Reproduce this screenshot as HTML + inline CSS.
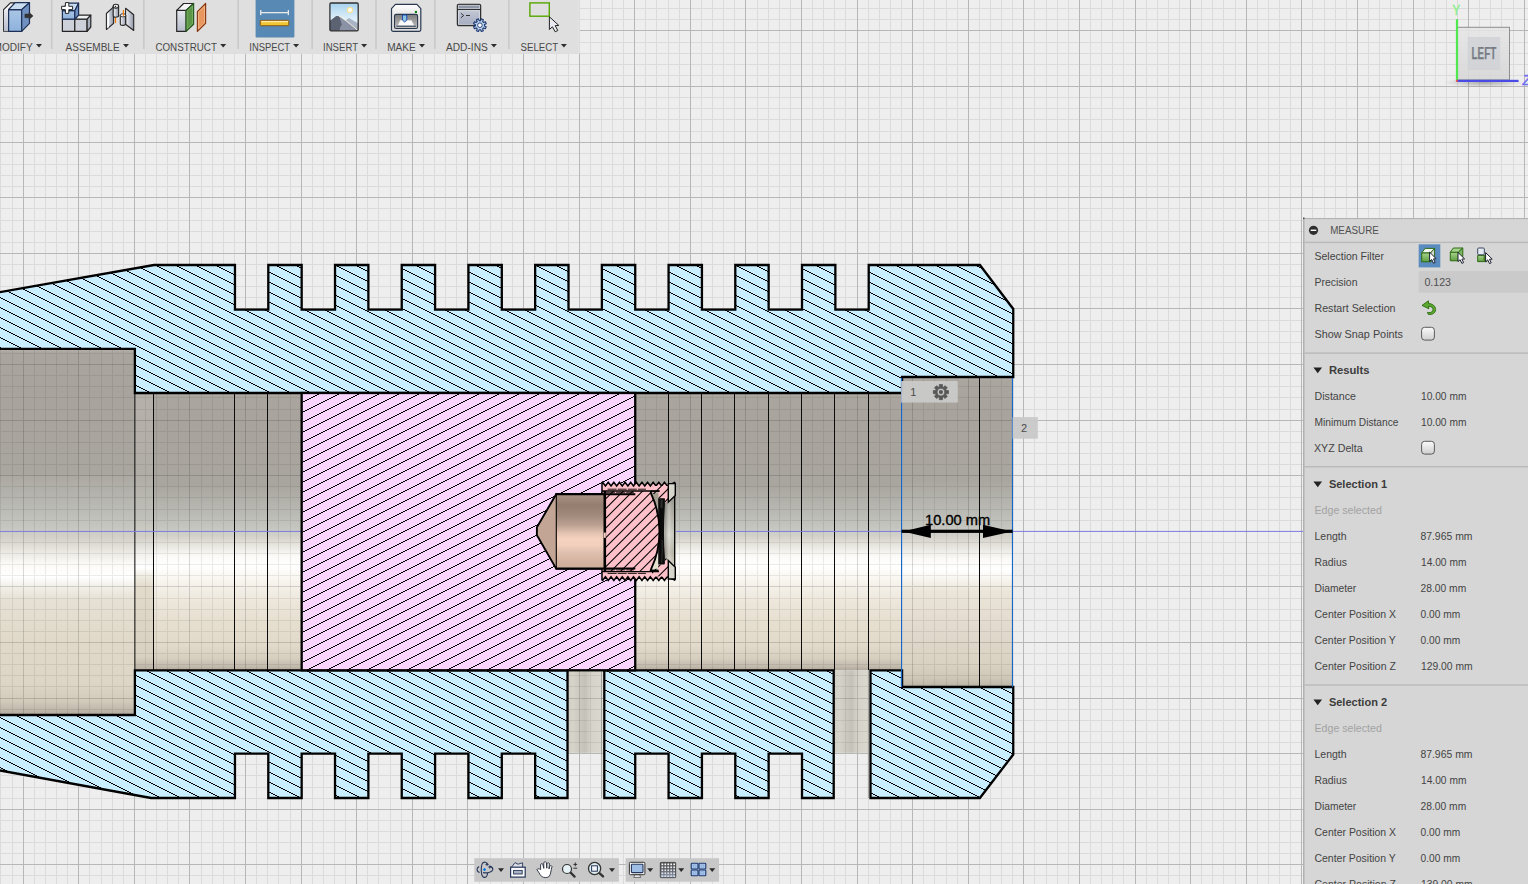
<!DOCTYPE html>
<html lang="en"><head><meta charset="utf-8"><title>Measure</title>
<style>
html,body{margin:0;padding:0;background:#eeeeee;overflow:hidden}
body{width:1528px;height:884px;position:relative;font-family:"Liberation Sans",Arial,sans-serif}
#cad{position:absolute;left:0;top:0;display:block}
</style></head><body>
<svg id="cad" width="1528" height="884" viewBox="0 0 1528 884">
<defs>
<linearGradient id="bore" x1="0" y1="0" x2="0" y2="1">
<stop offset="0.0" stop-color="#b6b2ab"/>
<stop offset="0.012" stop-color="#aaa69f"/>
<stop offset="0.1" stop-color="#a8a49d"/>
<stop offset="0.334" stop-color="#a9a69f"/>
<stop offset="0.428" stop-color="#b9b9b3"/>
<stop offset="0.487" stop-color="#c6c6c0"/>
<stop offset="0.522" stop-color="#d6d4cc"/>
<stop offset="0.557" stop-color="#eceae4"/>
<stop offset="0.587" stop-color="#fbfaf7"/>
<stop offset="0.622" stop-color="#ffffff"/>
<stop offset="0.657" stop-color="#fbf9f4"/>
<stop offset="0.7" stop-color="#f4f0e8"/>
<stop offset="0.757" stop-color="#ece6da"/>
<stop offset="0.827" stop-color="#e6dfd0"/>
<stop offset="0.91" stop-color="#e1d9c9"/>
<stop offset="0.957" stop-color="#d6cebf"/>
<stop offset="0.986" stop-color="#c2baac"/>
<stop offset="1.0" stop-color="#b0a89c"/>
</linearGradient>
<linearGradient id="boreC" x1="0" y1="0" x2="0" y2="1">
<stop offset="0.0" stop-color="#b6b2ab"/>
<stop offset="0.012" stop-color="#aaa69f"/>
<stop offset="0.1" stop-color="#a8a49d"/>
<stop offset="0.334" stop-color="#a9a69f"/>
<stop offset="0.428" stop-color="#b9b9b3"/>
<stop offset="0.487" stop-color="#c6c6c0"/>
<stop offset="0.522" stop-color="#d6d4cc"/>
<stop offset="0.557" stop-color="#eceae4"/>
<stop offset="0.587" stop-color="#fbfaf7"/>
<stop offset="0.622" stop-color="#ffffff"/>
<stop offset="0.652" stop-color="#f8f5ef"/>
<stop offset="0.689" stop-color="#ece6da"/>
<stop offset="0.75" stop-color="#e6dfd2"/>
<stop offset="0.806" stop-color="#e2dace"/>
<stop offset="0.926" stop-color="#d9d1c1"/>
<stop offset="0.97" stop-color="#cfc7b7"/>
<stop offset="0.99" stop-color="#c2baac"/>
<stop offset="1.0" stop-color="#b0a89c"/>
</linearGradient>
<linearGradient id="boreL" x1="0" y1="0" x2="0" y2="1">
<stop offset="0.0" stop-color="#b6b2ab"/>
<stop offset="0.012" stop-color="#aaa69f"/>
<stop offset="0.1" stop-color="#a8a49d"/>
<stop offset="0.334" stop-color="#a9a69f"/>
<stop offset="0.428" stop-color="#b9b9b3"/>
<stop offset="0.487" stop-color="#c6c6c0"/>
<stop offset="0.522" stop-color="#d6d4cc"/>
<stop offset="0.557" stop-color="#eceae4"/>
<stop offset="0.587" stop-color="#fbfaf7"/>
<stop offset="0.622" stop-color="#ffffff"/>
<stop offset="0.65" stop-color="#f2efe8"/>
<stop offset="0.685" stop-color="#e6e1d5"/>
<stop offset="0.8" stop-color="#e0d9c9"/>
<stop offset="0.915" stop-color="#ddd5c5"/>
<stop offset="0.962" stop-color="#d2cabb"/>
<stop offset="0.985" stop-color="#c0b8ab"/>
<stop offset="1.0" stop-color="#b2aa9d"/>
</linearGradient>
<linearGradient id="hole" x1="0" y1="0" x2="1" y2="0"><stop offset="0" stop-color="#cfcdc2"/><stop offset="0.15" stop-color="#d6d4ca"/><stop offset="0.42" stop-color="#c9c7bd"/><stop offset="0.52" stop-color="#c4c2b8"/><stop offset="0.68" stop-color="#d5d3c9"/><stop offset="1" stop-color="#dad8cf"/></linearGradient>
<linearGradient id="chamf" x1="0" y1="0" x2="0" y2="1"><stop offset="0" stop-color="#b6b2ab"/><stop offset="0.3" stop-color="#b0ada6"/><stop offset="0.45" stop-color="#c0c0ba"/><stop offset="0.52" stop-color="#d2d0c8"/><stop offset="0.585" stop-color="#f4f3ef"/><stop offset="0.63" stop-color="#ffffff"/><stop offset="0.66" stop-color="#f0ece2"/><stop offset="0.70" stop-color="#e2dbcc"/><stop offset="0.80" stop-color="#ddd5c5"/><stop offset="0.95" stop-color="#d8d0c0"/><stop offset="1" stop-color="#b8b0a3"/></linearGradient>
<linearGradient id="copper" x1="0" y1="0" x2="0" y2="1"><stop offset="0" stop-color="#ab9386"/><stop offset="0.15" stop-color="#947c6f"/><stop offset="0.3" stop-color="#a38b7e"/><stop offset="0.42" stop-color="#bda293"/><stop offset="0.52" stop-color="#e2c2b1"/><stop offset="0.60" stop-color="#f5d2c0"/><stop offset="0.68" stop-color="#f3d0be"/><stop offset="0.78" stop-color="#dfbfae"/><stop offset="0.91" stop-color="#d3b29f"/><stop offset="1" stop-color="#ccac99"/></linearGradient>
<linearGradient id="silver" x1="0" y1="0" x2="1" y2="0"><stop offset="0" stop-color="#8c8a82"/><stop offset="0.35" stop-color="#d8d6cc"/><stop offset="0.7" stop-color="#bdbbb0"/><stop offset="1" stop-color="#a8a69c"/></linearGradient>
<pattern id="hb" x="0" y="0" width="20" height="10" patternUnits="userSpaceOnUse" shape-rendering="crispEdges">
<rect x="5" y="0" width="2" height="1" fill="#000"/>
<rect x="7" y="1" width="2" height="1" fill="#000"/>
<rect x="9" y="2" width="2" height="1" fill="#000"/>
<rect x="11" y="3" width="2" height="1" fill="#000"/>
<rect x="13" y="4" width="2" height="1" fill="#000"/>
<rect x="15" y="5" width="2" height="1" fill="#000"/>
<rect x="17" y="6" width="2" height="1" fill="#000"/>
<rect x="19" y="7" width="2" height="1" fill="#000"/>
<rect x="-1" y="7" width="2" height="1" fill="#000"/>
<rect x="1" y="8" width="2" height="1" fill="#000"/>
<rect x="3" y="9" width="2" height="1" fill="#000"/>
</pattern>
<pattern id="hp" x="0" y="0" width="20" height="10" patternUnits="userSpaceOnUse" shape-rendering="crispEdges">
<rect x="5" y="0" width="2" height="1" fill="#000"/>
<rect x="3" y="1" width="2" height="1" fill="#000"/>
<rect x="1" y="2" width="2" height="1" fill="#000"/>
<rect x="19" y="3" width="2" height="1" fill="#000"/>
<rect x="-1" y="3" width="2" height="1" fill="#000"/>
<rect x="17" y="4" width="2" height="1" fill="#000"/>
<rect x="15" y="5" width="2" height="1" fill="#000"/>
<rect x="13" y="6" width="2" height="1" fill="#000"/>
<rect x="11" y="7" width="2" height="1" fill="#000"/>
<rect x="9" y="8" width="2" height="1" fill="#000"/>
<rect x="7" y="9" width="2" height="1" fill="#000"/>
</pattern>
<clipPath id="cBlue"><polygon points="-20.00,295.60 154.00,265.00 234.96,265.00 234.96,309.60 268.31,309.60 268.31,265.00 301.67,265.00 301.67,309.60 335.02,309.60 335.02,265.00 368.38,265.00 368.38,309.60 401.73,309.60 401.73,265.00 435.09,265.00 435.09,309.60 468.44,309.60 468.44,265.00 501.80,265.00 501.80,309.60 535.15,309.60 535.15,265.00 568.51,265.00 568.51,309.60 601.87,309.60 601.87,265.00 635.22,265.00 635.22,309.60 668.58,309.60 668.58,265.00 701.93,265.00 701.93,309.60 735.29,309.60 735.29,265.00 768.64,265.00 768.64,309.60 802.00,309.60 802.00,265.00 835.35,265.00 835.35,309.60 868.71,309.60 868.71,265.00 979.89,265.00 1013.25,309.00 1013.25,377.00 902.07,377.00 902.07,393.00 134.89,393.00 134.89,348.80 -20.00,348.80"/><polygon points="-20.00,715.00 134.89,715.00 134.89,670.30 567.50,670.30 567.50,798.00 535.15,798.00 535.15,753.60 501.80,753.60 501.80,798.00 468.44,798.00 468.44,753.60 435.09,753.60 435.09,798.00 401.73,798.00 401.73,753.60 368.38,753.60 368.38,798.00 335.02,798.00 335.02,753.60 301.67,753.60 301.67,798.00 268.31,798.00 268.31,753.60 234.96,753.60 234.96,798.00 151.00,798.00 -20.00,766.90"/><polygon points="604.30,670.30 833.70,670.30 833.70,798.00 802.00,798.00 802.00,753.60 768.64,753.60 768.64,798.00 735.29,798.00 735.29,753.60 701.93,753.60 701.93,798.00 668.58,798.00 668.58,753.60 635.22,753.60 635.22,798.00 604.30,798.00"/><polygon points="870.50,670.30 902.07,670.30 902.07,687.00 1013.25,687.00 1013.25,754.50 979.89,798.00 870.50,798.00"/></clipPath>
</defs>
<rect width="1528" height="884" fill="#eeeeee"/>
<path d="M0.5 0.0V884.0M12.5 0.0V884.0M34.5 0.0V884.0M45.5 0.0V884.0M56.5 0.0V884.0M67.5 0.0V884.0M89.5 0.0V884.0M101.5 0.0V884.0M112.5 0.0V884.0M123.5 0.0V884.0M145.5 0.0V884.0M156.5 0.0V884.0M167.5 0.0V884.0M178.5 0.0V884.0M201.5 0.0V884.0M212.5 0.0V884.0M223.5 0.0V884.0M234.5 0.0V884.0M256.5 0.0V884.0M267.5 0.0V884.0M278.5 0.0V884.0M290.5 0.0V884.0M312.5 0.0V884.0M323.5 0.0V884.0M334.5 0.0V884.0M345.5 0.0V884.0M367.5 0.0V884.0M378.5 0.0V884.0M390.5 0.0V884.0M401.5 0.0V884.0M423.5 0.0V884.0M434.5 0.0V884.0M445.5 0.0V884.0M456.5 0.0V884.0M479.5 0.0V884.0M490.5 0.0V884.0M501.5 0.0V884.0M512.5 0.0V884.0M534.5 0.0V884.0M545.5 0.0V884.0M556.5 0.0V884.0M568.5 0.0V884.0M590.5 0.0V884.0M601.5 0.0V884.0M612.5 0.0V884.0M623.5 0.0V884.0M645.5 0.0V884.0M656.5 0.0V884.0M668.5 0.0V884.0M679.5 0.0V884.0M701.5 0.0V884.0M712.5 0.0V884.0M723.5 0.0V884.0M734.5 0.0V884.0M757.5 0.0V884.0M768.5 0.0V884.0M779.5 0.0V884.0M790.5 0.0V884.0M812.5 0.0V884.0M823.5 0.0V884.0M834.5 0.0V884.0M845.5 0.0V884.0M868.5 0.0V884.0M879.5 0.0V884.0M890.5 0.0V884.0M901.5 0.0V884.0M923.5 0.0V884.0M934.5 0.0V884.0M946.5 0.0V884.0M957.5 0.0V884.0M979.5 0.0V884.0M990.5 0.0V884.0M1001.5 0.0V884.0M1012.5 0.0V884.0M1034.5 0.0V884.0M1046.5 0.0V884.0M1057.5 0.0V884.0M1068.5 0.0V884.0M1090.5 0.0V884.0M1101.5 0.0V884.0M1112.5 0.0V884.0M1123.5 0.0V884.0M1146.5 0.0V884.0M1157.5 0.0V884.0M1168.5 0.0V884.0M1179.5 0.0V884.0M1201.5 0.0V884.0M1212.5 0.0V884.0M1223.5 0.0V884.0M1235.5 0.0V884.0M1257.5 0.0V884.0M1268.5 0.0V884.0M1279.5 0.0V884.0M1290.5 0.0V884.0M1312.5 0.0V884.0M1324.5 0.0V884.0M1335.5 0.0V884.0M1346.5 0.0V884.0M1368.5 0.0V884.0M1379.5 0.0V884.0M1390.5 0.0V884.0M1401.5 0.0V884.0M1424.5 0.0V884.0M1435.5 0.0V884.0M1446.5 0.0V884.0M1457.5 0.0V884.0M1479.5 0.0V884.0M1490.5 0.0V884.0M1501.5 0.0V884.0M1513.5 0.0V884.0M0.0 8.5H1528.0M0.0 19.5H1528.0M0.0 42.5H1528.0M0.0 53.5H1528.0M0.0 64.5H1528.0M0.0 75.5H1528.0M0.0 97.5H1528.0M0.0 108.5H1528.0M0.0 119.5H1528.0M0.0 131.5H1528.0M0.0 153.5H1528.0M0.0 164.5H1528.0M0.0 175.5H1528.0M0.0 186.5H1528.0M0.0 208.5H1528.0M0.0 220.5H1528.0M0.0 231.5H1528.0M0.0 242.5H1528.0M0.0 264.5H1528.0M0.0 275.5H1528.0M0.0 286.5H1528.0M0.0 297.5H1528.0M0.0 320.5H1528.0M0.0 331.5H1528.0M0.0 342.5H1528.0M0.0 353.5H1528.0M0.0 375.5H1528.0M0.0 386.5H1528.0M0.0 397.5H1528.0M0.0 409.5H1528.0M0.0 431.5H1528.0M0.0 442.5H1528.0M0.0 453.5H1528.0M0.0 464.5H1528.0M0.0 486.5H1528.0M0.0 497.5H1528.0M0.0 509.5H1528.0M0.0 520.5H1528.0M0.0 542.5H1528.0M0.0 553.5H1528.0M0.0 564.5H1528.0M0.0 575.5H1528.0M0.0 598.5H1528.0M0.0 609.5H1528.0M0.0 620.5H1528.0M0.0 631.5H1528.0M0.0 653.5H1528.0M0.0 664.5H1528.0M0.0 675.5H1528.0M0.0 686.5H1528.0M0.0 709.5H1528.0M0.0 720.5H1528.0M0.0 731.5H1528.0M0.0 742.5H1528.0M0.0 764.5H1528.0M0.0 775.5H1528.0M0.0 787.5H1528.0M0.0 798.5H1528.0M0.0 820.5H1528.0M0.0 831.5H1528.0M0.0 842.5H1528.0M0.0 853.5H1528.0M0.0 875.5H1528.0" stroke="#dbdbdb" stroke-width="1" fill="none" shape-rendering="crispEdges"/>
<path d="M23.5 0.0V884.0M78.5 0.0V884.0M134.5 0.0V884.0M189.5 0.0V884.0M245.5 0.0V884.0M301.5 0.0V884.0M356.5 0.0V884.0M412.5 0.0V884.0M467.5 0.0V884.0M523.5 0.0V884.0M579.5 0.0V884.0M634.5 0.0V884.0M690.5 0.0V884.0M745.5 0.0V884.0M801.5 0.0V884.0M857.5 0.0V884.0M912.5 0.0V884.0M968.5 0.0V884.0M1023.5 0.0V884.0M1079.5 0.0V884.0M1135.5 0.0V884.0M1190.5 0.0V884.0M1246.5 0.0V884.0M1301.5 0.0V884.0M1357.5 0.0V884.0M1413.5 0.0V884.0M1468.5 0.0V884.0M1524.5 0.0V884.0M0.0 30.5H1528.0M0.0 86.5H1528.0M0.0 142.5H1528.0M0.0 197.5H1528.0M0.0 253.5H1528.0M0.0 308.5H1528.0M0.0 364.5H1528.0M0.0 420.5H1528.0M0.0 475.5H1528.0M0.0 586.5H1528.0M0.0 642.5H1528.0M0.0 698.5H1528.0M0.0 753.5H1528.0M0.0 809.5H1528.0M0.0 864.5H1528.0" stroke="#b7b7b7" stroke-width="1" fill="none" shape-rendering="crispEdges"/>
<g id="bore">
<rect x="-5.00" y="348.80" width="139.89" height="366.20" fill="url(#boreL)"/>
<rect x="134.89" y="393.00" width="767.18" height="277.30" fill="url(#bore)"/>
<rect x="902.07" y="377.00" width="111.18" height="310.00" fill="url(#boreC)"/>
<rect x="567.5" y="670.3" width="34.20" height="82.50" fill="url(#hole)"/>
<rect x="833.7" y="670.3" width="34.40" height="82.50" fill="url(#hole)"/>
<rect x="601.30" y="670.3" width="0.9" height="127.70" fill="#9a9a96"/>
<rect x="867.90" y="670.3" width="0.9" height="127.70" fill="#9a9a96"/>
<rect x="134.89" y="393.0" width="18.41" height="277.30" fill="url(#chamf)"/>
<path d="M0.5 348.8V715.0M12.5 348.8V715.0M34.5 348.8V715.0M45.5 348.8V715.0M56.5 348.8V715.0M67.5 348.8V715.0M89.5 348.8V715.0M101.5 348.8V715.0M112.5 348.8V715.0M123.5 348.8V715.0M0.0 353.5H134.9M0.0 375.5H134.9M0.0 386.5H134.9M0.0 397.5H134.9M0.0 409.5H134.9M0.0 431.5H134.9M0.0 442.5H134.9M0.0 453.5H134.9M0.0 464.5H134.9M0.0 486.5H134.9M0.0 497.5H134.9M0.0 509.5H134.9M0.0 520.5H134.9M0.0 542.5H134.9M0.0 553.5H134.9M0.0 564.5H134.9M0.0 575.5H134.9M0.0 598.5H134.9M0.0 609.5H134.9M0.0 620.5H134.9M0.0 631.5H134.9M0.0 653.5H134.9M0.0 664.5H134.9M0.0 675.5H134.9M0.0 686.5H134.9M0.0 709.5H134.9" stroke="#000" stroke-opacity="0.075" stroke-width="1" fill="none" shape-rendering="crispEdges"/>
<path d="M23.5 348.8V715.0M78.5 348.8V715.0M134.5 348.8V715.0M0.0 364.5H134.9M0.0 420.5H134.9M0.0 475.5H134.9M0.0 586.5H134.9M0.0 642.5H134.9M0.0 698.5H134.9" stroke="#000" stroke-opacity="0.15" stroke-width="1" fill="none" shape-rendering="crispEdges"/>
<path d="M145.5 393.0V670.3M156.5 393.0V670.3M167.5 393.0V670.3M178.5 393.0V670.3M201.5 393.0V670.3M212.5 393.0V670.3M223.5 393.0V670.3M234.5 393.0V670.3M256.5 393.0V670.3M267.5 393.0V670.3M278.5 393.0V670.3M290.5 393.0V670.3M312.5 393.0V670.3M323.5 393.0V670.3M334.5 393.0V670.3M345.5 393.0V670.3M367.5 393.0V670.3M378.5 393.0V670.3M390.5 393.0V670.3M401.5 393.0V670.3M423.5 393.0V670.3M434.5 393.0V670.3M445.5 393.0V670.3M456.5 393.0V670.3M479.5 393.0V670.3M490.5 393.0V670.3M501.5 393.0V670.3M512.5 393.0V670.3M534.5 393.0V670.3M545.5 393.0V670.3M556.5 393.0V670.3M568.5 393.0V670.3M590.5 393.0V670.3M601.5 393.0V670.3M612.5 393.0V670.3M623.5 393.0V670.3M645.5 393.0V670.3M656.5 393.0V670.3M668.5 393.0V670.3M679.5 393.0V670.3M701.5 393.0V670.3M712.5 393.0V670.3M723.5 393.0V670.3M734.5 393.0V670.3M757.5 393.0V670.3M768.5 393.0V670.3M779.5 393.0V670.3M790.5 393.0V670.3M812.5 393.0V670.3M823.5 393.0V670.3M834.5 393.0V670.3M845.5 393.0V670.3M868.5 393.0V670.3M879.5 393.0V670.3M890.5 393.0V670.3M901.5 393.0V670.3M134.9 397.5H902.1M134.9 409.5H902.1M134.9 431.5H902.1M134.9 442.5H902.1M134.9 453.5H902.1M134.9 464.5H902.1M134.9 486.5H902.1M134.9 497.5H902.1M134.9 509.5H902.1M134.9 520.5H902.1M134.9 542.5H902.1M134.9 553.5H902.1M134.9 564.5H902.1M134.9 575.5H902.1M134.9 598.5H902.1M134.9 609.5H902.1M134.9 620.5H902.1M134.9 631.5H902.1M134.9 653.5H902.1M134.9 664.5H902.1" stroke="#000" stroke-opacity="0.075" stroke-width="1" fill="none" shape-rendering="crispEdges"/>
<path d="M189.5 393.0V670.3M245.5 393.0V670.3M301.5 393.0V670.3M356.5 393.0V670.3M412.5 393.0V670.3M467.5 393.0V670.3M523.5 393.0V670.3M579.5 393.0V670.3M634.5 393.0V670.3M690.5 393.0V670.3M745.5 393.0V670.3M801.5 393.0V670.3M857.5 393.0V670.3M134.9 420.5H902.1M134.9 475.5H902.1M134.9 586.5H902.1M134.9 642.5H902.1" stroke="#000" stroke-opacity="0.15" stroke-width="1" fill="none" shape-rendering="crispEdges"/>
<path d="M923.5 377.0V687.0M934.5 377.0V687.0M946.5 377.0V687.0M957.5 377.0V687.0M979.5 377.0V687.0M990.5 377.0V687.0M1001.5 377.0V687.0M1012.5 377.0V687.0M902.1 386.5H1013.2M902.1 397.5H1013.2M902.1 409.5H1013.2M902.1 431.5H1013.2M902.1 442.5H1013.2M902.1 453.5H1013.2M902.1 464.5H1013.2M902.1 486.5H1013.2M902.1 497.5H1013.2M902.1 509.5H1013.2M902.1 520.5H1013.2M902.1 542.5H1013.2M902.1 553.5H1013.2M902.1 564.5H1013.2M902.1 575.5H1013.2M902.1 598.5H1013.2M902.1 609.5H1013.2M902.1 620.5H1013.2M902.1 631.5H1013.2M902.1 653.5H1013.2M902.1 664.5H1013.2M902.1 675.5H1013.2M902.1 686.5H1013.2" stroke="#000" stroke-opacity="0.075" stroke-width="1" fill="none" shape-rendering="crispEdges"/>
<path d="M912.5 377.0V687.0M968.5 377.0V687.0M902.1 420.5H1013.2M902.1 475.5H1013.2M902.1 586.5H1013.2M902.1 642.5H1013.2" stroke="#000" stroke-opacity="0.15" stroke-width="1" fill="none" shape-rendering="crispEdges"/>
<path d="M568.5 670.3V753.0M590.5 670.3V753.0M601.5 670.3V753.0M567.5 675.5H601.7M567.5 686.5H601.7M567.5 709.5H601.7M567.5 720.5H601.7M567.5 731.5H601.7M567.5 742.5H601.7" stroke="#000" stroke-opacity="0.075" stroke-width="1" fill="none" shape-rendering="crispEdges"/>
<path d="M579.5 670.3V753.0M567.5 698.5H601.7" stroke="#000" stroke-opacity="0.15" stroke-width="1" fill="none" shape-rendering="crispEdges"/>
<path d="M834.5 670.3V753.0M845.5 670.3V753.0M833.7 675.5H868.1M833.7 686.5H868.1M833.7 709.5H868.1M833.7 720.5H868.1M833.7 731.5H868.1M833.7 742.5H868.1" stroke="#000" stroke-opacity="0.075" stroke-width="1" fill="none" shape-rendering="crispEdges"/>
<path d="M857.5 670.3V753.0M833.7 698.5H868.1" stroke="#000" stroke-opacity="0.15" stroke-width="1" fill="none" shape-rendering="crispEdges"/>
<rect x="153" y="393.0" width="1" height="277.30" fill="#0a0a0a" shape-rendering="crispEdges"/>
<rect x="234" y="393.0" width="1" height="277.30" fill="#0a0a0a" shape-rendering="crispEdges"/>
<rect x="267" y="393.0" width="1" height="277.30" fill="#0a0a0a" shape-rendering="crispEdges"/>
<rect x="668" y="393.0" width="1" height="277.30" fill="#0a0a0a" shape-rendering="crispEdges"/>
<rect x="701" y="393.0" width="1" height="277.30" fill="#0a0a0a" shape-rendering="crispEdges"/>
<rect x="734" y="393.0" width="1" height="277.30" fill="#0a0a0a" shape-rendering="crispEdges"/>
<rect x="768" y="393.0" width="1" height="277.30" fill="#0a0a0a" shape-rendering="crispEdges"/>
<rect x="801" y="393.0" width="1" height="277.30" fill="#0a0a0a" shape-rendering="crispEdges"/>
<rect x="834" y="393.0" width="1" height="277.30" fill="#0a0a0a" shape-rendering="crispEdges"/>
<rect x="868" y="393.0" width="1" height="277.30" fill="#0a0a0a" shape-rendering="crispEdges"/>
<rect x="979" y="377.0" width="1" height="310.00" fill="#0a0a0a" shape-rendering="crispEdges"/>
<rect x="134.39" y="393.0" width="1" height="277.30" fill="#111"/>
</g>
<rect x="0" y="530.90" width="301.67" height="1" fill="#7c7ce0"/>
<rect x="676" y="530.90" width="627" height="1" fill="#7c7ce0"/>
<g id="blue"><polygon points="-20.00,295.60 154.00,265.00 234.96,265.00 234.96,309.60 268.31,309.60 268.31,265.00 301.67,265.00 301.67,309.60 335.02,309.60 335.02,265.00 368.38,265.00 368.38,309.60 401.73,309.60 401.73,265.00 435.09,265.00 435.09,309.60 468.44,309.60 468.44,265.00 501.80,265.00 501.80,309.60 535.15,309.60 535.15,265.00 568.51,265.00 568.51,309.60 601.87,309.60 601.87,265.00 635.22,265.00 635.22,309.60 668.58,309.60 668.58,265.00 701.93,265.00 701.93,309.60 735.29,309.60 735.29,265.00 768.64,265.00 768.64,309.60 802.00,309.60 802.00,265.00 835.35,265.00 835.35,309.60 868.71,309.60 868.71,265.00 979.89,265.00 1013.25,309.00 1013.25,377.00 902.07,377.00 902.07,393.00 134.89,393.00 134.89,348.80 -20.00,348.80" fill="#c8eeff"/><polygon points="-20.00,715.00 134.89,715.00 134.89,670.30 567.50,670.30 567.50,798.00 535.15,798.00 535.15,753.60 501.80,753.60 501.80,798.00 468.44,798.00 468.44,753.60 435.09,753.60 435.09,798.00 401.73,798.00 401.73,753.60 368.38,753.60 368.38,798.00 335.02,798.00 335.02,753.60 301.67,753.60 301.67,798.00 268.31,798.00 268.31,753.60 234.96,753.60 234.96,798.00 151.00,798.00 -20.00,766.90" fill="#c8eeff"/><polygon points="604.30,670.30 833.70,670.30 833.70,798.00 802.00,798.00 802.00,753.60 768.64,753.60 768.64,798.00 735.29,798.00 735.29,753.60 701.93,753.60 701.93,798.00 668.58,798.00 668.58,753.60 635.22,753.60 635.22,798.00 604.30,798.00" fill="#c8eeff"/><polygon points="870.50,670.30 902.07,670.30 902.07,687.00 1013.25,687.00 1013.25,754.50 979.89,798.00 870.50,798.00" fill="#c8eeff"/>
<polygon points="-20.00,295.60 154.00,265.00 234.96,265.00 234.96,309.60 268.31,309.60 268.31,265.00 301.67,265.00 301.67,309.60 335.02,309.60 335.02,265.00 368.38,265.00 368.38,309.60 401.73,309.60 401.73,265.00 435.09,265.00 435.09,309.60 468.44,309.60 468.44,265.00 501.80,265.00 501.80,309.60 535.15,309.60 535.15,265.00 568.51,265.00 568.51,309.60 601.87,309.60 601.87,265.00 635.22,265.00 635.22,309.60 668.58,309.60 668.58,265.00 701.93,265.00 701.93,309.60 735.29,309.60 735.29,265.00 768.64,265.00 768.64,309.60 802.00,309.60 802.00,265.00 835.35,265.00 835.35,309.60 868.71,309.60 868.71,265.00 979.89,265.00 1013.25,309.00 1013.25,377.00 902.07,377.00 902.07,393.00 134.89,393.00 134.89,348.80 -20.00,348.80" fill="url(#hb)"/>
<polygon points="-20.00,715.00 134.89,715.00 134.89,670.30 567.50,670.30 567.50,798.00 535.15,798.00 535.15,753.60 501.80,753.60 501.80,798.00 468.44,798.00 468.44,753.60 435.09,753.60 435.09,798.00 401.73,798.00 401.73,753.60 368.38,753.60 368.38,798.00 335.02,798.00 335.02,753.60 301.67,753.60 301.67,798.00 268.31,798.00 268.31,753.60 234.96,753.60 234.96,798.00 151.00,798.00 -20.00,766.90" fill="url(#hb)"/>
<polygon points="604.30,670.30 833.70,670.30 833.70,798.00 802.00,798.00 802.00,753.60 768.64,753.60 768.64,798.00 735.29,798.00 735.29,753.60 701.93,753.60 701.93,798.00 668.58,798.00 668.58,753.60 635.22,753.60 635.22,798.00 604.30,798.00" fill="url(#hb)"/>
<polygon points="870.50,670.30 902.07,670.30 902.07,687.00 1013.25,687.00 1013.25,754.50 979.89,798.00 870.50,798.00" fill="url(#hb)"/>
<polygon points="-20.00,295.60 154.00,265.00 234.96,265.00 234.96,309.60 268.31,309.60 268.31,265.00 301.67,265.00 301.67,309.60 335.02,309.60 335.02,265.00 368.38,265.00 368.38,309.60 401.73,309.60 401.73,265.00 435.09,265.00 435.09,309.60 468.44,309.60 468.44,265.00 501.80,265.00 501.80,309.60 535.15,309.60 535.15,265.00 568.51,265.00 568.51,309.60 601.87,309.60 601.87,265.00 635.22,265.00 635.22,309.60 668.58,309.60 668.58,265.00 701.93,265.00 701.93,309.60 735.29,309.60 735.29,265.00 768.64,265.00 768.64,309.60 802.00,309.60 802.00,265.00 835.35,265.00 835.35,309.60 868.71,309.60 868.71,265.00 979.89,265.00 1013.25,309.00 1013.25,377.00 902.07,377.00 902.07,393.00 134.89,393.00 134.89,348.80 -20.00,348.80" fill="none" stroke="#000" stroke-width="2.3" stroke-linejoin="miter"/>
<polygon points="-20.00,715.00 134.89,715.00 134.89,670.30 567.50,670.30 567.50,798.00 535.15,798.00 535.15,753.60 501.80,753.60 501.80,798.00 468.44,798.00 468.44,753.60 435.09,753.60 435.09,798.00 401.73,798.00 401.73,753.60 368.38,753.60 368.38,798.00 335.02,798.00 335.02,753.60 301.67,753.60 301.67,798.00 268.31,798.00 268.31,753.60 234.96,753.60 234.96,798.00 151.00,798.00 -20.00,766.90" fill="none" stroke="#000" stroke-width="2.3" stroke-linejoin="miter"/>
<polygon points="604.30,670.30 833.70,670.30 833.70,798.00 802.00,798.00 802.00,753.60 768.64,753.60 768.64,798.00 735.29,798.00 735.29,753.60 701.93,753.60 701.93,798.00 668.58,798.00 668.58,753.60 635.22,753.60 635.22,798.00 604.30,798.00" fill="none" stroke="#000" stroke-width="2.3" stroke-linejoin="miter"/>
<polygon points="870.50,670.30 902.07,670.30 902.07,687.00 1013.25,687.00 1013.25,754.50 979.89,798.00 870.50,798.00" fill="none" stroke="#000" stroke-width="2.3" stroke-linejoin="miter"/>
</g>
<clipPath id="cPink"><rect x="301.67" y="393.0" width="333.55" height="277.30"/></clipPath>
<g id="pink"><rect x="301.67" y="393.0" width="333.55" height="277.30" fill="#fad6ff"/>
<rect x="301.67" y="393.0" width="333.55" height="277.30" fill="url(#hp)"/>
<rect x="301.67" y="393.0" width="333.55" height="277.30" fill="none" stroke="#000" stroke-width="2.3"/>
</g>
<g id="insert">
<defs>
<linearGradient id="silv2" x1="0" y1="0" x2="0" y2="1"><stop offset="0" stop-color="#9b998f"/><stop offset="0.3" stop-color="#bdbbb1"/><stop offset="0.55" stop-color="#d9d8cf"/><stop offset="0.8" stop-color="#c3c0b2"/><stop offset="1" stop-color="#e2dfd2"/></linearGradient>
<linearGradient id="silv3" x1="0" y1="0" x2="1" y2="0"><stop offset="0" stop-color="#000" stop-opacity="0.28"/><stop offset="0.45" stop-color="#fff" stop-opacity="0.18"/><stop offset="1" stop-color="#000" stop-opacity="0.05"/></linearGradient>
</defs>
<path d="M536.9 535.3V527.3L538.1 525.3L556.3 493.9H604.8V568.9H556.3L538.1 537.3Z" fill="#c2a594"/>
<rect x="556.3" y="493.9" width="48.5" height="75.0" fill="url(#copper)"/>
<path d="M556.3 493.9V568.9" stroke="#000" stroke-width="1.1" fill="none"/>
<path d="M635.3 493.9H556.3L538.1 525.3L536.9 527.3V535.3L538.1 537.3L556.3 568.9H635.3" stroke="#000" stroke-width="1.9" fill="none" stroke-linejoin="round"/>
<path d="M602.00 493.90L602.00 482.70L602.60 482.20L605.41 485.90L608.22 482.20L611.03 485.90L613.84 482.20L616.65 485.90L619.46 482.20L622.27 485.90L625.08 482.20L627.89 485.90L630.70 482.20L633.51 485.90L636.32 482.20L639.13 485.90L641.94 482.20L644.75 485.90L647.56 482.20L650.37 485.90L653.18 482.20L655.99 485.90L658.80 482.20L661.61 485.90L664.42 482.20L667.23 485.90L675.30 482.20L675.30 493.90Z" fill="#ffc1c9"/>
<path d="M602.00 493.90L602.00 482.70L602.60 482.20L605.41 485.90L608.22 482.20L611.03 485.90L613.84 482.20L616.65 485.90L619.46 482.20L622.27 485.90L625.08 482.20L627.89 485.90L630.70 482.20L633.51 485.90L636.32 482.20L639.13 485.90L641.94 482.20L644.75 485.90L647.56 482.20L650.37 485.90L653.18 482.20L655.99 485.90L658.80 482.20L661.61 485.90L664.42 482.20L667.23 485.90L675.30 482.20" fill="none" stroke="#000" stroke-width="1.5" stroke-linejoin="miter"/>
<path d="M607.6 489.2H646" stroke="#000" stroke-width="0.9" stroke-dasharray="9 1.1" fill="none"/>
<path d="M602.00 568.70L602.00 579.90L602.60 580.40L605.41 576.70L608.22 580.40L611.03 576.70L613.84 580.40L616.65 576.70L619.46 580.40L622.27 576.70L625.08 580.40L627.89 576.70L630.70 580.40L633.51 576.70L636.32 580.40L639.13 576.70L641.94 580.40L644.75 576.70L647.56 580.40L650.37 576.70L653.18 580.40L655.99 576.70L658.80 580.40L661.61 576.70L664.42 580.40L667.23 576.70L675.30 580.40L675.30 568.70Z" fill="#ffc1c9"/>
<path d="M602.00 568.70L602.00 579.90L602.60 580.40L605.41 576.70L608.22 580.40L611.03 576.70L613.84 580.40L616.65 576.70L619.46 580.40L622.27 576.70L625.08 580.40L627.89 576.70L630.70 580.40L633.51 576.70L636.32 580.40L639.13 576.70L641.94 580.40L644.75 576.70L647.56 580.40L650.37 576.70L653.18 580.40L655.99 576.70L658.80 580.40L661.61 576.70L664.42 580.40L667.23 576.70L675.30 580.40" fill="none" stroke="#000" stroke-width="1.5" stroke-linejoin="miter"/>
<path d="M607.6 573.3999999999999H646" stroke="#000" stroke-width="0.9" stroke-dasharray="9 1.1" fill="none"/>
<path d="M651 486H668.3V502.4L664.8 505.6V498.2H658.2V493.9H651Z" fill="#ffc1c9"/>
<path d="M651 576.5999999999999H668.3V560.1999999999999L664.8 556.9999999999999V564.3999999999999H658.2V568.6999999999999H651Z" fill="#ffc1c9"/>
<path d="M664.6 503.5L674.8 495.4V567.1999999999999L664.6 559.0999999999999Z" fill="url(#silv2)"/>
<path d="M664.6 503.5L674.8 495.4V567.1999999999999L664.6 559.0999999999999Z" fill="url(#silv3)"/>
<path d="M674.7 482.6V579.9999999999999" stroke="#000" stroke-width="1.3" fill="none"/>
<path d="M651.4 492.4H658.4V508Z" fill="#a39d92"/>
<path d="M651.4 570.1999999999999H658.4V554.5999999999999Z" fill="#e5e1cf"/>
<path d="M651 491.2H659.4" stroke="#000" stroke-width="1.2"/>
<path d="M651 570.3999999999999H658.6" stroke="#000" stroke-width="1.6"/>
<path d="M658.2 498.2H664.2Q664.9 498.2 664.9 499V506Q663.2 531.3 664.9 556.5999999999999V563.5999999999999Q664.9 564.3999999999999 664.2 564.3999999999999H658.2Z" fill="#0c0c0c"/>
<path d="M661.6 499.6V508" stroke="#2c2c2a" stroke-width="2.2" fill="none"/>
<path d="M662.2 540Q662.6 552 661.6 562.5999999999999" stroke="#2a2a28" stroke-width="1.2" fill="none"/>
<clipPath id="cLens"><path d="M604.8 491.0H650.6L651.2 493.9A88.9 88.9 0 0 1 651.2 568.9L650.6 571.5999999999999H604.8Z"/></clipPath>
<path d="M604.8 491.0H650.6L651.2 493.9A88.9 88.9 0 0 1 651.2 568.9L650.6 571.5999999999999H604.8Z" fill="#ffc1c9"/>
<g clip-path="url(#cLens)" stroke="#000" stroke-width="1.05">
<line x1="508.2" y1="480" x2="403.2" y2="585"/>
<line x1="517.9" y1="480" x2="412.9" y2="585"/>
<line x1="527.6" y1="480" x2="422.6" y2="585"/>
<line x1="537.3" y1="480" x2="432.3" y2="585"/>
<line x1="547.0" y1="480" x2="442.0" y2="585"/>
<line x1="556.7" y1="480" x2="451.7" y2="585"/>
<line x1="566.4" y1="480" x2="461.4" y2="585"/>
<line x1="576.1" y1="480" x2="471.1" y2="585"/>
<line x1="585.8" y1="480" x2="480.8" y2="585"/>
<line x1="595.5" y1="480" x2="490.5" y2="585"/>
<line x1="605.2" y1="480" x2="500.2" y2="585"/>
<line x1="614.9" y1="480" x2="509.9" y2="585"/>
<line x1="624.6" y1="480" x2="519.6" y2="585"/>
<line x1="634.3" y1="480" x2="529.3" y2="585"/>
<line x1="644.0" y1="480" x2="539.0" y2="585"/>
<line x1="653.7" y1="480" x2="548.7" y2="585"/>
<line x1="663.4" y1="480" x2="558.4" y2="585"/>
<line x1="673.1" y1="480" x2="568.1" y2="585"/>
<line x1="682.8" y1="480" x2="577.8" y2="585"/>
<line x1="692.5" y1="480" x2="587.5" y2="585"/>
<line x1="702.2" y1="480" x2="597.2" y2="585"/>
<line x1="711.9" y1="480" x2="606.9" y2="585"/>
<line x1="721.6" y1="480" x2="616.6" y2="585"/>
<line x1="731.3" y1="480" x2="626.3" y2="585"/>
<line x1="741.0" y1="480" x2="636.0" y2="585"/>
<line x1="750.7" y1="480" x2="645.7" y2="585"/>
</g>
<path d="M650.6 491.0L651.2 493.9A88.9 88.9 0 0 1 651.2 568.9L650.6 571.5999999999999" fill="none" stroke="#000" stroke-width="1.9"/>
<path d="M602 491.0H659.6M602 571.5999999999999H659.0" fill="none" stroke="#000" stroke-width="1.3"/>
<path d="M606 492.7H634M606 569.8999999999999H634" stroke="#000" stroke-width="0.8" stroke-dasharray="9 1.1" fill="none"/>
<path d="M604.8 491.0V571.5999999999999" fill="none" stroke="#000" stroke-width="2.6"/>
<path d="M555.3 494.29999999999995H635.3M555.3 568.5H635.3" stroke="#000" stroke-width="1.9" fill="none"/>
<rect x="603.8" y="532.6" width="2" height="5.2" fill="#f7d2c4"/>
<clipPath id="cRing"><path d="M652 486H668.3V502.4L664.8 505.6V498.2H658.2V493.9H652Z"/><path d="M652 576.5999999999999H668.3V560.1999999999999L664.8 556.9999999999999V564.3999999999999H658.2V568.6999999999999H652Z"/></clipPath>
<g clip-path="url(#cRing)" stroke="#000" stroke-width="1.05">
<line x1="512.2" y1="480" x2="407.2" y2="585"/>
<line x1="521.9" y1="480" x2="416.9" y2="585"/>
<line x1="531.6" y1="480" x2="426.6" y2="585"/>
<line x1="541.3" y1="480" x2="436.3" y2="585"/>
<line x1="551.0" y1="480" x2="446.0" y2="585"/>
<line x1="560.7" y1="480" x2="455.7" y2="585"/>
<line x1="570.4" y1="480" x2="465.4" y2="585"/>
<line x1="580.1" y1="480" x2="475.1" y2="585"/>
<line x1="589.8" y1="480" x2="484.8" y2="585"/>
<line x1="599.5" y1="480" x2="494.5" y2="585"/>
<line x1="609.2" y1="480" x2="504.2" y2="585"/>
<line x1="618.9" y1="480" x2="513.9" y2="585"/>
<line x1="628.6" y1="480" x2="523.6" y2="585"/>
<line x1="638.3" y1="480" x2="533.3" y2="585"/>
<line x1="648.0" y1="480" x2="543.0" y2="585"/>
<line x1="657.7" y1="480" x2="552.7" y2="585"/>
<line x1="667.4" y1="480" x2="562.4" y2="585"/>
<line x1="677.1" y1="480" x2="572.1" y2="585"/>
<line x1="686.8" y1="480" x2="581.8" y2="585"/>
<line x1="696.5" y1="480" x2="591.5" y2="585"/>
<line x1="706.2" y1="480" x2="601.2" y2="585"/>
<line x1="715.9" y1="480" x2="610.9" y2="585"/>
<line x1="725.6" y1="480" x2="620.6" y2="585"/>
<line x1="735.3" y1="480" x2="630.3" y2="585"/>
<line x1="745.0" y1="480" x2="640.0" y2="585"/>
<line x1="754.7" y1="480" x2="649.7" y2="585"/>
<line x1="764.4" y1="480" x2="659.4" y2="585"/>
<line x1="774.1" y1="480" x2="669.1" y2="585"/>
</g>
<path d="M668.3 483.6H675.3V495.4L668.3 502.2Z" fill="#d6d6cc" stroke="#000" stroke-width="1.4" stroke-linejoin="miter"/>
<path d="M668.3 578.9999999999999H675.3V567.1999999999999L668.3 560.3999999999999Z" fill="#d6d6cc" stroke="#000" stroke-width="1.4" stroke-linejoin="miter"/>
</g>
<g id="sel"><rect x="901" y="378.0" width="1.15" height="309.0" fill="#1767c9"/>
<rect x="1011.9" y="378.0" width="1.15" height="309.0" fill="#1767c9"/></g>
<g id="dim"><rect x="901.6" y="529.6999999999999" width="111.0" height="3.2" fill="#000"/>
<polygon points="903.1,531.4 930.8,524.8 930.8,538.0" fill="#000"/>
<polygon points="1012.1,531.4 983,524.8 983,538.0" fill="#000"/>
<text x="957.6" y="525.2" text-anchor="middle" font-family="Liberation Sans, Arial, sans-serif" font-size="15.2" fill="#000" stroke="#000" stroke-width="0.35" textLength="65" lengthAdjust="spacingAndGlyphs">10.00 mm</text></g>
<g id="labels" font-family="Liberation Sans, Arial, sans-serif" font-size="11" fill="#4a4a4a">
<rect x="901.2" y="381" width="56.6" height="21.6" fill="#c9c9c9" fill-opacity="0.96"/>
<text x="910.2" y="396">1</text>
<path d="M948.45,390.57 L948.45,393.63 L946.25,393.75 L945.85,394.71 L947.32,396.35 L945.15,398.52 L943.51,397.05 L942.55,397.45 L942.43,399.65 L939.37,399.65 L939.25,397.45 L938.29,397.05 L936.65,398.52 L934.48,396.35 L935.95,394.71 L935.55,393.75 L933.35,393.63 L933.35,390.57 L935.55,390.45 L935.95,389.49 L934.48,387.85 L936.65,385.68 L938.29,387.15 L939.25,386.75 L939.37,384.55 L942.43,384.55 L942.55,386.75 L943.51,387.15 L945.15,385.68 L947.32,387.85 L945.85,389.49 L946.25,390.45Z M944.80,392.1 a3.9,3.9 0 1,0 -7.8,0 a3.9,3.9 0 1,0 7.8,0Z" fill="#585858" fill-rule="evenodd" stroke="#585858" stroke-width="0.8" stroke-linejoin="round"/>
<circle cx="940.9" cy="392.1" r="2.1" fill="#585858"/>
<rect x="1012.6" y="417.1" width="25.2" height="21.6" fill="#c9c9c9" fill-opacity="0.96"/>
<text x="1020.9" y="431.8">2</text>
</g>
<g id="cube">
<defs><linearGradient id="cubeg" x1="0" y1="0" x2="0" y2="1"><stop offset="0" stop-color="#e6e6e6"/><stop offset="1" stop-color="#d6d6d6"/></linearGradient><radialGradient id="shadow" cx="0.5" cy="0.5" r="0.5"><stop offset="0" stop-color="#000" stop-opacity="0.28"/><stop offset="1" stop-color="#000" stop-opacity="0"/></radialGradient></defs>
<ellipse cx="1484" cy="82.5" rx="40" ry="5" fill="url(#shadow)"/>
<rect x="1457.5" y="27.3" width="52" height="52.6" fill="url(#cubeg)" fill-opacity="0.88" stroke="#8e8e8e" stroke-width="1"/>
<rect x="1467.7" y="37" width="32.4" height="33" fill="#cdd0d6" fill-opacity="0.75"/>
<text x="1471.6" y="59" font-family="Liberation Sans, Arial, sans-serif" font-weight="bold" font-size="15.6" fill="#787d85" stroke="#787d85" stroke-width="0.25" textLength="24.6" lengthAdjust="spacingAndGlyphs">LEFT</text>
<rect x="1455.9" y="19.2" width="2.2" height="62" fill="#4fe84f"/>
<rect x="1457" y="79.8" width="61.6" height="2.2" fill="#4a4ae6"/>
<rect x="1455.9" y="79.8" width="2" height="2" fill="#e85050"/>
<text x="1452.6" y="15.4" font-family="Liberation Sans, Arial, sans-serif" font-size="14" fill="#8cf08c" stroke="#8cf08c" stroke-width="0.5" textLength="7.6" lengthAdjust="spacingAndGlyphs">Y</text>
<text x="1522.4" y="85.4" font-family="Liberation Sans, Arial, sans-serif" font-size="14" font-style="italic" fill="#7272f0" stroke="#7272f0" stroke-width="0.5">Z</text>
</g>
</svg>
<svg id="ui" width="1528" height="884" viewBox="0 0 1528 884" style="position:absolute;left:0;top:0">
<defs>
<linearGradient id="gBlueF" x1="0" y1="0" x2="0" y2="1"><stop offset="0" stop-color="#a9c6e6"/><stop offset="1" stop-color="#8eb2dc"/></linearGradient>
<linearGradient id="gGrayF" x1="0" y1="0" x2="0" y2="1"><stop offset="0" stop-color="#e6e8ee"/><stop offset="1" stop-color="#b6bccb"/></linearGradient>
<linearGradient id="gGrayH" x1="0" y1="0" x2="1" y2="0"><stop offset="0" stop-color="#f4f5f7"/><stop offset="0.5" stop-color="#c4c8d2"/><stop offset="1" stop-color="#8e95a5"/></linearGradient>
<linearGradient id="gSky" x1="0" y1="0" x2="0" y2="1"><stop offset="0" stop-color="#a6d2ee"/><stop offset="0.6" stop-color="#e2f1fb"/><stop offset="1" stop-color="#eef6fc"/></linearGradient>
<linearGradient id="gPrn" x1="0" y1="0" x2="0" y2="1"><stop offset="0" stop-color="#ffffff"/><stop offset="0.35" stop-color="#e9e9e9"/><stop offset="1" stop-color="#dcdcdc"/></linearGradient>
<linearGradient id="gWin" x1="0" y1="0" x2="0" y2="1"><stop offset="0" stop-color="#7c7c7c"/><stop offset="1" stop-color="#c4c4c4"/></linearGradient>
<linearGradient id="gTerm" x1="0" y1="0" x2="0" y2="1"><stop offset="0" stop-color="#cfd3de"/><stop offset="1" stop-color="#a4abbf"/></linearGradient>
<linearGradient id="gChk" x1="0" y1="0" x2="0" y2="1"><stop offset="0" stop-color="#fafafa"/><stop offset="1" stop-color="#cfcfcf"/></linearGradient>
<linearGradient id="gGridI" x1="0" y1="0" x2="0" y2="1"><stop offset="0" stop-color="#4c4c4c"/><stop offset="0.5" stop-color="#5c6068"/><stop offset="1" stop-color="#98a4bc"/></linearGradient>
<linearGradient id="gGreenF" x1="0" y1="0" x2="0" y2="1"><stop offset="0" stop-color="#a8d48e"/><stop offset="1" stop-color="#5f9e40"/></linearGradient>
</defs>
<g id="toolbar">
<rect x="0" y="0" width="579.5" height="53.8" fill="#dfdfdf"/>
<rect x="578.6" y="0" width="1" height="53.8" fill="#e8e8e8"/>
<rect x="50.900000000000006" y="0" width="1.6" height="49" fill="#c9c9c9"/>
<rect x="143.0" y="0" width="1.6" height="49" fill="#c9c9c9"/>
<rect x="237.39999999999998" y="0" width="1.6" height="49" fill="#c9c9c9"/>
<rect x="311.4" y="0" width="1.6" height="49" fill="#c9c9c9"/>
<rect x="375.2" y="0" width="1.6" height="49" fill="#c9c9c9"/>
<rect x="434.0" y="0" width="1.6" height="49" fill="#c9c9c9"/>
<rect x="508.09999999999997" y="0" width="1.6" height="49" fill="#c9c9c9"/>
<path d="M255.6 0H294.4V36.4a1 1 0 0 1 -1 1H256.6a1 1 0 0 1 -1 -1Z" fill="#5889b5"/>
<text x="-6.4" y="51.0" font-family="Liberation Sans, Arial, sans-serif" font-size="10" fill="#484848" textLength="39.1" lengthAdjust="spacingAndGlyphs">MODIFY</text>
<path d="M36.0 44.1h6l-3 3.5z" fill="#2e2e2e"/>
<text x="65.6" y="51.0" font-family="Liberation Sans, Arial, sans-serif" font-size="10" fill="#484848" textLength="54.0" lengthAdjust="spacingAndGlyphs">ASSEMBLE</text>
<path d="M123.0 44.1h6l-3 3.5z" fill="#2e2e2e"/>
<text x="155.4" y="51.0" font-family="Liberation Sans, Arial, sans-serif" font-size="10" fill="#484848" textLength="61.5" lengthAdjust="spacingAndGlyphs">CONSTRUCT</text>
<path d="M220.2 44.1h6l-3 3.5z" fill="#2e2e2e"/>
<text x="249.3" y="51.0" font-family="Liberation Sans, Arial, sans-serif" font-size="10" fill="#484848" textLength="40.7" lengthAdjust="spacingAndGlyphs">INSPECT</text>
<path d="M293.1 44.1h6l-3 3.5z" fill="#2e2e2e"/>
<text x="323.0" y="51.0" font-family="Liberation Sans, Arial, sans-serif" font-size="10" fill="#484848" textLength="35.0" lengthAdjust="spacingAndGlyphs">INSERT</text>
<path d="M361.1 44.1h6l-3 3.5z" fill="#2e2e2e"/>
<text x="387.2" y="51.0" font-family="Liberation Sans, Arial, sans-serif" font-size="10" fill="#484848" textLength="28.6" lengthAdjust="spacingAndGlyphs">MAKE</text>
<path d="M419.0 44.1h6l-3 3.5z" fill="#2e2e2e"/>
<text x="446.0" y="51.0" font-family="Liberation Sans, Arial, sans-serif" font-size="10" fill="#484848" textLength="41.8" lengthAdjust="spacingAndGlyphs">ADD-INS</text>
<path d="M490.9 44.1h6l-3 3.5z" fill="#2e2e2e"/>
<text x="520.5" y="51.0" font-family="Liberation Sans, Arial, sans-serif" font-size="10" fill="#484848" textLength="37.6" lengthAdjust="spacingAndGlyphs">SELECT</text>
<path d="M560.9 44.1h6l-3 3.5z" fill="#2e2e2e"/>
<g stroke-linejoin="round" stroke-width="1.2">
<path d="M3.6 9.6L10.4 2.8H15.2L8.6 9.6V31.2H3.6Z" fill="#f6f7f9" stroke="#252525"/>
<path d="M3.9 10V31H8.3V10Z" fill="url(#gGrayF)"/>
<path d="M8.6 9.6H21.7V31.4H8.6Z" fill="url(#gBlueF)" stroke="#1d2f55"/>
<path d="M8.6 9.6L15.2 2.7H29.5L21.7 9.6Z" fill="#c9dcf0" stroke="#1d2f55"/>
<path d="M21.7 9.6L29.5 2.7V23.3L21.7 31.4Z" fill="#6f90c0" stroke="#1d2f55"/>
<path d="M24.9 14.1H29V12.2L33.1 15.9L29 19.6V17.7H24.9Z" fill="#333" stroke="#333" stroke-width="0.5"/>
</g>
<g stroke-linejoin="round" stroke-width="1.2">
<path d="M62.4 19.2H74.8V31.4H62.4Z" fill="#cdd1da" stroke="#252525"/>
<path d="M74.8 19.2H87.1V31.4H74.8Z" fill="#cdd1da" stroke="#252525"/>
<path d="M74.8 19.2L78.6 15.2H90.8L87.1 19.2Z" fill="#eef0f3" stroke="#252525"/>
<path d="M87.1 19.2L90.8 15.2V27L87.1 31.4Z" fill="#a9b0be" stroke="#252525"/>
<path d="M62.4 10.7H74.8V19.2H62.4Z" fill="url(#gBlueF)" stroke="#1d2f55"/>
<path d="M62.4 10.7L66.6 3.2H78.6L74.8 10.7Z" fill="#c9dcf0" stroke="#1d2f55"/>
<path d="M74.8 10.7L78.6 3.2V15.2L74.8 19.2Z" fill="#6f90c0" stroke="#1d2f55"/>
<path d="M65.4 2.6H68.8V6.3H72.6V9.6H68.8V13.4H65.4V9.6H61.6V6.3H65.4Z" fill="#ffffff" stroke="#252525" stroke-width="1"/>
</g>
<g stroke-linejoin="round" stroke-width="1.1">
<path d="M106.4 13.5L113.6 6.9V23.3L106.4 29.5Z" fill="url(#gGrayH)" stroke="#252525"/>
<path d="M113.2 6.2V16a2.7 1.2 0 0 0 5.4 0V6.2Z" fill="url(#gGrayH)" stroke="#252525"/>
<ellipse cx="115.9" cy="6.2" rx="2.7" ry="1.9" fill="#f4f4f6" stroke="#252525"/><circle cx="115.5" cy="6.4" r="0.7" fill="#252525"/>
<path d="M107.3 13.9L109 12.4V27L107.3 28.4Z" fill="#fafbfc"/>
<path d="M132.8 15.3L131.2 14V28.4L132.8 29.6Z" fill="#7f8797"/>
<rect x="114.9" y="17.8" width="1.2" height="5.3" fill="#ff7a00"/>
<path d="M125.6 8.2L133.7 14.8V30.5L125.6 24.2Z" fill="url(#gGrayH)" stroke="#252525"/>
<path d="M120.3 15.3V24a2.7 1.4 0 0 0 5.4 0V15.3Z" fill="url(#gGrayH)" stroke="#252525"/>
<ellipse cx="123" cy="15.3" rx="2.7" ry="1.6" fill="#f4f4f6" stroke="#252525" stroke-width="0.8"/>
<rect x="122.8" y="10" width="1.2" height="5.8" fill="#ff7a00"/>
</g>
<g stroke-linejoin="round" stroke-width="1.2">
<path d="M176.7 10.4H186.1V31.4H176.7Z" fill="url(#gGrayF)" stroke="#252525"/>
<path d="M176.7 10.4L183.6 3.5H193.6L186.1 10.4Z" fill="#f5f5f7" stroke="#252525"/>
<path d="M186.1 10.4L193.6 3.5V24.2L186.1 31.4Z" fill="#5b9747" stroke="#23551b"/>
<path d="M187.1 11L192.6 5.9V23.6L187.1 29Z" fill="none" stroke="#8cc07a" stroke-width="0.6"/>
<path d="M197.4 11.6L205.6 3.5V23.3L197.4 31.4Z" fill="#e8975f" stroke="#86340c"/>
<path d="M198.4 12.2L204.6 6V22.8L198.4 29Z" fill="none" stroke="#f6c8a4" stroke-width="0.6"/>
</g>
<g>
<rect x="260.1" y="12" width="28.9" height="1.3" fill="#e9e9e9"/><rect x="260.1" y="10" width="1.3" height="5.1" fill="#e9e9e9"/><rect x="287.7" y="10" width="1.3" height="5.1" fill="#e9e9e9"/>
<rect x="260.3" y="20.3" width="28.5" height="5.4" rx="0.9" fill="#f2c431" stroke="#84500c" stroke-width="0.9"/>
<rect x="261.2" y="21" width="26.8" height="1" fill="#fbe7a0"/>
<rect x="262.6" y="20.9" width="0.8" height="1.7" fill="#fff6d0"/>
<rect x="265.6" y="20.9" width="0.8" height="1.7" fill="#fff6d0"/>
<rect x="268.6" y="20.9" width="0.8" height="1.7" fill="#fff6d0"/>
<rect x="271.6" y="20.9" width="0.8" height="1.7" fill="#fff6d0"/>
<rect x="274.6" y="20.9" width="0.8" height="1.7" fill="#fff6d0"/>
<rect x="277.6" y="20.9" width="0.8" height="1.7" fill="#fff6d0"/>
<rect x="280.6" y="20.9" width="0.8" height="1.7" fill="#fff6d0"/>
<rect x="283.6" y="20.9" width="0.8" height="1.7" fill="#fff6d0"/>
<rect x="286.6" y="20.9" width="0.8" height="1.7" fill="#fff6d0"/>
</g>
<g>
<clipPath id="cIns"><rect x="329.9" y="3" width="28.3" height="27.8" rx="0.8"/></clipPath>
<rect x="329.9" y="3" width="28.3" height="27.8" fill="url(#gSky)"/>
<g clip-path="url(#cIns)">
<path d="M344.5 21L349 18L358.5 23.5V31H344.5Z" fill="#a9b5c5"/>
<path d="M329.5 21.2L336.4 16.1L339.4 16.3L358.5 31H329.5Z" fill="#8b92a6"/>
<path d="M329.5 21.2L336.4 16.1L339.3 16.3L340.6 20.5L341.9 24.5L340.2 27.3L339.6 31H329.5Z" fill="#5b6373"/>
<path d="M338.8 16.2Q342.5 17 345.5 20.2L358 30.6" fill="none" stroke="#fff3d8" stroke-width="0.8"/>
<circle cx="350" cy="10" r="3.1" fill="#ffe38a"/><circle cx="350" cy="10" r="2" fill="#ffffff"/>
</g>
<rect x="329.9" y="3" width="28.3" height="27.8" rx="1.2" fill="none" stroke="#303030" stroke-width="1.3"/>
</g>
<g stroke-linejoin="round">
<path d="M391.5 8.6L395.4 4.3H416.9L420.8 8.6V29.8a1.5 1.5 0 0 1 -1.5 1.5H393a1.5 1.5 0 0 1 -1.5 -1.5Z" fill="url(#gPrn)" stroke="#2a3950" stroke-width="1.2"/>
<rect x="394.5" y="14.4" width="23.1" height="14.1" rx="1.6" fill="url(#gWin)" stroke="#2a3950" stroke-width="1.1"/>
<path d="M400.2 20.2H411.4L414.2 25.7H397.7Z" fill="#fafafa" stroke="#d0d0d0" stroke-width="0.4"/>
<path d="M396.4 26.2H415.9" stroke="#2a3950" stroke-width="1" fill="none"/>
<path d="M402.5 15V20.1L404.6 22L406.8 20.1V15Z" fill="#8fc3e2" stroke="#1140b0" stroke-width="0.9"/>
<rect x="414.9" y="10.9" width="2.1" height="2.1" fill="#0a800a"/>
</g>
<g stroke-linejoin="round">
<rect x="457.4" y="4.4" width="23.2" height="21.1" rx="1.2" fill="url(#gTerm)" stroke="#303030" stroke-width="1.3"/>
<rect x="458.4" y="5.3" width="21.2" height="3.4" fill="#8e95a5" stroke="#dfe2ea" stroke-width="0.5"/>
<rect x="457.4" y="9" width="23.2" height="1.1" fill="#303030"/>
<rect x="458.5" y="10.6" width="21" height="13.8" fill="none" stroke="#e4e7ee" stroke-width="0.6"/>
<path d="M460.9 13.3L463.7 15.5L460.9 17.8" fill="none" stroke="#252525" stroke-width="0.9"/><rect x="466" y="15" width="4" height="0.9" fill="#252525"/>
<path d="M486.24,26.64 L485.40,28.67 L483.61,27.92 L482.62,28.91 L483.37,30.70 L481.34,31.54 L480.60,29.75 L479.20,29.75 L478.46,31.54 L476.43,30.70 L477.18,28.91 L476.19,27.92 L474.40,28.67 L473.56,26.64 L475.35,25.90 L475.35,24.50 L473.56,23.76 L474.40,21.73 L476.19,22.48 L477.18,21.49 L476.43,19.70 L478.46,18.86 L479.20,20.65 L480.60,20.65 L481.34,18.86 L483.37,19.70 L482.62,21.49 L483.61,22.48 L485.40,21.73 L486.24,23.76 L484.45,24.50 L484.45,25.90Z" fill="#b9d1ed" stroke="#1b3870" stroke-width="1.1"/>
<circle cx="479.9" cy="25.2" r="2.3" fill="#ffffff" stroke="#1b3870" stroke-width="0.9"/>
</g>
<g>
<rect x="529.9" y="2.9" width="19.4" height="13.3" fill="none" stroke="#56a600" stroke-width="1.4"/>
<path d="M549.4 16.8V29.5L552.4 26.8L555.2 31.8L557.8 30.5L555.2 25.7L558.8 25.4Z" fill="#e9ebf0" stroke="#222" stroke-width="1" stroke-linejoin="round"/>
</g>
</g>
<g id="panel">
<rect x="1303.2" y="218" width="224.79999999999995" height="666" fill="#d6d6d6"/>
<rect x="1303.2" y="218" width="224.79999999999995" height="1.1" fill="#b2b2b2"/>
<rect x="1303.2" y="218" width="1.2" height="666" fill="#a9a9a9"/>
<rect x="1303.2" y="217.5" width="1.2" height="1.4" fill="#222"/>
<rect x="1304.4" y="241.70000000000002" width="224.79999999999995" height="1.4" fill="#b9b9b9"/>
<rect x="1304.4" y="352.40000000000003" width="224.79999999999995" height="1.4" fill="#b9b9b9"/>
<rect x="1304.4" y="466.1" width="224.79999999999995" height="1.4" fill="#b9b9b9"/>
<rect x="1304.4" y="684.3" width="224.79999999999995" height="1.4" fill="#b9b9b9"/>
<circle cx="1313.5" cy="230.3" r="4.6" fill="#2f2f2f"/><rect x="1310.7" y="229.6" width="5.6" height="1.4" fill="#fff"/>
<text x="1330.2" y="234.0" font-family="Liberation Sans, Arial, sans-serif" font-size="10" fill="#505050" textLength="48.6" lengthAdjust="spacingAndGlyphs">MEASURE</text>
<text x="1314.5" y="260" font-family="Liberation Sans, Arial, sans-serif" font-size="10.67" fill="#444444" textLength="69.4" lengthAdjust="spacingAndGlyphs">Selection Filter</text>
<text x="1314.5" y="286" font-family="Liberation Sans, Arial, sans-serif" font-size="10.67" fill="#444444" textLength="43" lengthAdjust="spacingAndGlyphs">Precision</text>
<text x="1314.5" y="312" font-family="Liberation Sans, Arial, sans-serif" font-size="10.67" fill="#444444" textLength="81" lengthAdjust="spacingAndGlyphs">Restart Selection</text>
<text x="1314.5" y="338" font-family="Liberation Sans, Arial, sans-serif" font-size="10.67" fill="#444444" textLength="88.5" lengthAdjust="spacingAndGlyphs">Show Snap Points</text>
<path d="M1313.4 367.6h8.7l-4.35 5.6z" fill="#222"/>
<text x="1328.9" y="374" font-family="Liberation Sans, Arial, sans-serif" font-size="10.67" font-weight="bold" fill="#3c3c3c" textLength="40.6" lengthAdjust="spacingAndGlyphs">Results</text>
<text x="1314.5" y="400" font-family="Liberation Sans, Arial, sans-serif" font-size="10.67" fill="#444444" textLength="41.5" lengthAdjust="spacingAndGlyphs">Distance</text>
<text x="1314.5" y="426" font-family="Liberation Sans, Arial, sans-serif" font-size="10.67" fill="#444444" textLength="84" lengthAdjust="spacingAndGlyphs">Minimum Distance</text>
<text x="1314.0" y="452" font-family="Liberation Sans, Arial, sans-serif" font-size="10.67" fill="#444444" textLength="48.6" lengthAdjust="spacingAndGlyphs">XYZ Delta</text>
<text x="1421.0" y="400" font-family="Liberation Sans, Arial, sans-serif" font-size="10.67" fill="#444444" textLength="45.4" lengthAdjust="spacingAndGlyphs">10.00 mm</text>
<text x="1421.0" y="426" font-family="Liberation Sans, Arial, sans-serif" font-size="10.67" fill="#444444" textLength="45.4" lengthAdjust="spacingAndGlyphs">10.00 mm</text>
<rect x="1421.6" y="327.29999999999995" width="12.8" height="12.8" rx="3" fill="url(#gChk)" stroke="#5a5a5a" stroke-width="1"/>
<rect x="1421.6" y="441.29999999999995" width="12.8" height="12.8" rx="3" fill="url(#gChk)" stroke="#5a5a5a" stroke-width="1"/>
<rect x="1418.7" y="271.1" width="110" height="21.6" fill="#cacaca"/>
<text x="1424.4" y="286" font-family="Liberation Sans, Arial, sans-serif" font-size="10.67" fill="#505050" textLength="26.6" lengthAdjust="spacingAndGlyphs">0.123</text>
<rect x="1418.7" y="244.3" width="21.6" height="23.1" fill="#5b8cc0"/>
<g transform="translate(1421.2,246.8)" stroke-linejoin="round">
<path d="M0.5 6H9.5V15H0.5Z" fill="url(#gGreenF)" stroke="#2d6a12" stroke-width="1"/>
<path d="M0.5 6L4 1.6H13.4L9.5 6Z" fill="#f4f6f2" stroke="#2d6a12" stroke-width="1"/>
<path d="M9.5 6L13.4 1.6V10.6L9.5 15Z" fill="#d8dcd4" stroke="#2d6a12" stroke-width="1"/>
</g>
<path transform="translate(1429.6,252.2) scale(1.0)" d="M0 0V9.2L2.1 7.3L3.9 11L5.6 10.2L3.9 6.7L6.6 6.5Z" fill="#fff" stroke="#1c2030" stroke-width="1" stroke-linejoin="round"/>
<g transform="translate(1449.8,246.8)" stroke-linejoin="round">
<path d="M0.5 5.4H8.6V14H0.5Z" fill="url(#gGreenF)" stroke="#2d6a12" stroke-width="1"/>
<path d="M0.5 5.4L3.6 1.2H13L8.6 5.4Z" fill="#a6d48e" stroke="#2d6a12" stroke-width="1"/>
<path d="M8.6 5.4L13 1.2V9.8L8.6 14Z" fill="#7cb85e" stroke="#2d6a12" stroke-width="1"/>
</g>
<path transform="translate(1458.0,252.4) scale(1.0)" d="M0 0V9.2L2.1 7.3L3.9 11L5.6 10.2L3.9 6.7L6.6 6.5Z" fill="#fff" stroke="#1c2030" stroke-width="1" stroke-linejoin="round"/>
<g transform="translate(1477.2,246.8)" stroke-linejoin="round">
<rect x="0.5" y="8.6" width="6.6" height="6.2" fill="url(#gGreenF)" stroke="#2d6a12" stroke-width="1"/>
<rect x="0.5" y="1.2" width="6.6" height="6.8" rx="1" fill="#e6eaf2" stroke="#3a4660" stroke-width="1"/>
<rect x="7.1" y="8.6" width="2.6" height="6.2" fill="#7cb85e" stroke="#2d6a12" stroke-width="0.8"/>
</g>
<path transform="translate(1485.6,252.6) scale(1.0)" d="M0 0V9.2L2.1 7.3L3.9 11L5.6 10.2L3.9 6.7L6.6 6.5Z" fill="#fff" stroke="#1c2030" stroke-width="1" stroke-linejoin="round"/>
<g transform="translate(1421.2,300.2)">
<path d="M7.2 0.6L0.8 5.2L7.6 8.6L7.2 6.2C10 6 11.8 7.4 11.8 9.4C11.8 11.4 10 12.6 7.6 12.4L6.2 12.2L7.2 14.2C11.2 14.8 14.4 12.8 14.4 9.4C14.4 6 11.4 3.4 7.4 3.4Z" fill="#5aa82e" stroke="#2c6a10" stroke-width="0.9" stroke-linejoin="round"/>
</g>
<path d="M1313.4 481.6h8.7l-4.35 5.6z" fill="#222"/>
<text x="1328.9" y="488" font-family="Liberation Sans, Arial, sans-serif" font-size="10.67" font-weight="bold" fill="#3c3c3c" textLength="58.2" lengthAdjust="spacingAndGlyphs">Selection 1</text>
<text x="1314.5" y="514" font-family="Liberation Sans, Arial, sans-serif" font-size="10.67" fill="#a2a2a2" textLength="67.3" lengthAdjust="spacingAndGlyphs">Edge selected</text>
<text x="1314.5" y="540" font-family="Liberation Sans, Arial, sans-serif" font-size="10.67" fill="#444444" textLength="32.1" lengthAdjust="spacingAndGlyphs">Length</text>
<text x="1420.4" y="540" font-family="Liberation Sans, Arial, sans-serif" font-size="10.67" fill="#444444" textLength="52.1" lengthAdjust="spacingAndGlyphs">87.965 mm</text>
<text x="1314.5" y="566" font-family="Liberation Sans, Arial, sans-serif" font-size="10.67" fill="#444444" textLength="32.4" lengthAdjust="spacingAndGlyphs">Radius</text>
<text x="1421.0" y="566" font-family="Liberation Sans, Arial, sans-serif" font-size="10.67" fill="#444444" textLength="45.4" lengthAdjust="spacingAndGlyphs">14.00 mm</text>
<text x="1314.5" y="592" font-family="Liberation Sans, Arial, sans-serif" font-size="10.67" fill="#444444" textLength="41.7" lengthAdjust="spacingAndGlyphs">Diameter</text>
<text x="1420.6" y="592" font-family="Liberation Sans, Arial, sans-serif" font-size="10.67" fill="#444444" textLength="45.6" lengthAdjust="spacingAndGlyphs">28.00 mm</text>
<text x="1314.5" y="618" font-family="Liberation Sans, Arial, sans-serif" font-size="10.67" fill="#444444" textLength="81.6" lengthAdjust="spacingAndGlyphs">Center Position X</text>
<text x="1420.6" y="618" font-family="Liberation Sans, Arial, sans-serif" font-size="10.67" fill="#444444" textLength="39.6" lengthAdjust="spacingAndGlyphs">0.00 mm</text>
<text x="1314.5" y="644" font-family="Liberation Sans, Arial, sans-serif" font-size="10.67" fill="#444444" textLength="81.2" lengthAdjust="spacingAndGlyphs">Center Position Y</text>
<text x="1420.6" y="644" font-family="Liberation Sans, Arial, sans-serif" font-size="10.67" fill="#444444" textLength="39.6" lengthAdjust="spacingAndGlyphs">0.00 mm</text>
<text x="1314.5" y="670" font-family="Liberation Sans, Arial, sans-serif" font-size="10.67" fill="#444444" textLength="81.4" lengthAdjust="spacingAndGlyphs">Center Position Z</text>
<text x="1421.0" y="670" font-family="Liberation Sans, Arial, sans-serif" font-size="10.67" fill="#444444" textLength="51.6" lengthAdjust="spacingAndGlyphs">129.00 mm</text>
<path d="M1313.4 699.6h8.7l-4.35 5.6z" fill="#222"/>
<text x="1328.9" y="706" font-family="Liberation Sans, Arial, sans-serif" font-size="10.67" font-weight="bold" fill="#3c3c3c" textLength="58.2" lengthAdjust="spacingAndGlyphs">Selection 2</text>
<text x="1314.5" y="732" font-family="Liberation Sans, Arial, sans-serif" font-size="10.67" fill="#a2a2a2" textLength="67.3" lengthAdjust="spacingAndGlyphs">Edge selected</text>
<text x="1314.5" y="758" font-family="Liberation Sans, Arial, sans-serif" font-size="10.67" fill="#444444" textLength="32.1" lengthAdjust="spacingAndGlyphs">Length</text>
<text x="1420.4" y="758" font-family="Liberation Sans, Arial, sans-serif" font-size="10.67" fill="#444444" textLength="52.1" lengthAdjust="spacingAndGlyphs">87.965 mm</text>
<text x="1314.5" y="784" font-family="Liberation Sans, Arial, sans-serif" font-size="10.67" fill="#444444" textLength="32.4" lengthAdjust="spacingAndGlyphs">Radius</text>
<text x="1421.0" y="784" font-family="Liberation Sans, Arial, sans-serif" font-size="10.67" fill="#444444" textLength="45.4" lengthAdjust="spacingAndGlyphs">14.00 mm</text>
<text x="1314.5" y="810" font-family="Liberation Sans, Arial, sans-serif" font-size="10.67" fill="#444444" textLength="41.7" lengthAdjust="spacingAndGlyphs">Diameter</text>
<text x="1420.6" y="810" font-family="Liberation Sans, Arial, sans-serif" font-size="10.67" fill="#444444" textLength="45.6" lengthAdjust="spacingAndGlyphs">28.00 mm</text>
<text x="1314.5" y="836" font-family="Liberation Sans, Arial, sans-serif" font-size="10.67" fill="#444444" textLength="81.6" lengthAdjust="spacingAndGlyphs">Center Position X</text>
<text x="1420.6" y="836" font-family="Liberation Sans, Arial, sans-serif" font-size="10.67" fill="#444444" textLength="39.6" lengthAdjust="spacingAndGlyphs">0.00 mm</text>
<text x="1314.5" y="862" font-family="Liberation Sans, Arial, sans-serif" font-size="10.67" fill="#444444" textLength="81.2" lengthAdjust="spacingAndGlyphs">Center Position Y</text>
<text x="1420.6" y="862" font-family="Liberation Sans, Arial, sans-serif" font-size="10.67" fill="#444444" textLength="39.6" lengthAdjust="spacingAndGlyphs">0.00 mm</text>
<text x="1314.5" y="888" font-family="Liberation Sans, Arial, sans-serif" font-size="10.67" fill="#444444" textLength="81.4" lengthAdjust="spacingAndGlyphs">Center Position Z</text>
<text x="1421.0" y="888" font-family="Liberation Sans, Arial, sans-serif" font-size="10.67" fill="#444444" textLength="51.6" lengthAdjust="spacingAndGlyphs">139.00 mm</text>
</g>
<g id="navbar">
<rect x="474.3" y="858.2" width="144.6" height="23.5" fill="#c8c8c8"/>
<rect x="625.6" y="858.2" width="93.4" height="23.5" fill="#c8c8c8"/>
<g fill="none" stroke="#26365a" stroke-width="1.1" stroke-linecap="round">
<path d="M483.2 862.6C480.6 864.5 480.6 875 483.2 877C485.8 878.4 487.4 876 487.6 873.2"/>
<path d="M483.2 862.6C485.4 861.4 486.8 862.6 487.4 864.4"/>
<path d="M478.8 866.8C476.2 868.4 476.6 871.6 479.2 872.4"/>
<path d="M483.4 872.6C488 873.4 492.4 872 492.8 869.6C493 868 491.6 866.8 490 866.4"/>
<path d="M485.8 864.4h2.6M487.1 863.1v2.6M488.6 867h2.4M489.8 865.8v2.4" stroke-width="0.9"/>
</g>
<path d="M483 869.6h3M484.5 868.1v3" stroke="#0a7ae6" stroke-width="1.3" fill="none"/>
<path d="M498 868.2h6l-3 3.7z" fill="#2a2a2a"/>
<path d="M511.5 867.2L515 862.6L518 864.2L522.6 862.8V867.2" fill="#d8dce4" stroke="#26365a" stroke-width="0.9" stroke-linejoin="round"/>
<rect x="510.6" y="867.2" width="14.6" height="9.9" fill="#fbfbfb" stroke="#26365a" stroke-width="1.2"/>
<rect x="513.6" y="870.4" width="8.6" height="3.6" fill="#a9b1c2" stroke="#26365a" stroke-width="0.9"/>
<path d="M540.6 869.6C539 868.4 537.2 868.6 536.8 869.8C538.4 871 539.6 874.6 541.6 876.4C543.4 878 548 878 549.4 876.2C550.6 874.4 551 870.4 552 866.4C551.4 865.2 550.2 865.4 549.6 866.6L549 869L549.4 863.6C548.8 862.4 547.4 862.6 547 863.8L546.8 868.2L546.4 862.6C545.6 861.4 544.2 861.6 543.8 862.8L543.8 868.4L542.8 864.2C542 863.2 540.8 863.6 540.6 864.8Z" fill="#ffffff" stroke="#222a3a" stroke-width="0.9" stroke-linejoin="round"/>
<path d="M570.4 872.4L574.6 876.6" stroke="#333" stroke-width="2.2" stroke-linecap="round"/>
<circle cx="567" cy="869" r="4.5" fill="#e6f2f6" stroke="#333" stroke-width="1.2"/>
<path d="M573.4 864.4h3.8M575.3 862.5v3.8M573.4 868.2h3.8" stroke="#222" stroke-width="0.9" fill="none"/>
<path d="M599.4 873.2L603 876.4" stroke="#333" stroke-width="2.4" stroke-linecap="round"/>
<circle cx="594.6" cy="868.5" r="6.1" fill="#dfeef2" stroke="#333" stroke-width="1.3"/>
<rect x="591.6" y="865.8" width="5.8" height="5.4" fill="#f4f6fa" stroke="#26365a" stroke-width="1"/>
<path d="M609 868.2h6l-3 3.7z" fill="#2a2a2a"/>
<rect x="629.4" y="862.3" width="15.5" height="12.4" rx="1" fill="#fafafa" stroke="#333" stroke-width="1"/>
<rect x="631.4" y="864.2" width="11.6" height="8.4" rx="0.8" fill="#9dbde5" stroke="#26365a" stroke-width="1.1"/>
<path d="M634.6 875H639.8L640.6 877.4H633.8Z" fill="#fafafa" stroke="#333" stroke-width="0.7"/>
<path d="M647.2 868.2h6l-3 3.7z" fill="#2a2a2a"/>
<rect x="660.3" y="862.4" width="15.4" height="15.3" rx="0.8" fill="url(#gGridI)" stroke="#3a3a3a" stroke-width="0.8"/>
<rect x="661.50" y="863.50" width="1.7" height="1.7" fill="#ffffff" fill-opacity="1.00"/>
<rect x="661.50" y="866.45" width="1.7" height="1.7" fill="#ffffff" fill-opacity="0.91"/>
<rect x="661.50" y="869.40" width="1.7" height="1.7" fill="#ffffff" fill-opacity="0.82"/>
<rect x="661.50" y="872.35" width="1.7" height="1.7" fill="#ffffff" fill-opacity="0.73"/>
<rect x="661.50" y="875.30" width="1.7" height="1.7" fill="#ffffff" fill-opacity="0.64"/>
<rect x="664.45" y="863.50" width="1.7" height="1.7" fill="#ffffff" fill-opacity="1.00"/>
<rect x="664.45" y="866.45" width="1.7" height="1.7" fill="#ffffff" fill-opacity="0.91"/>
<rect x="664.45" y="869.40" width="1.7" height="1.7" fill="#ffffff" fill-opacity="0.82"/>
<rect x="664.45" y="872.35" width="1.7" height="1.7" fill="#ffffff" fill-opacity="0.73"/>
<rect x="664.45" y="875.30" width="1.7" height="1.7" fill="#ffffff" fill-opacity="0.64"/>
<rect x="667.40" y="863.50" width="1.7" height="1.7" fill="#ffffff" fill-opacity="1.00"/>
<rect x="667.40" y="866.45" width="1.7" height="1.7" fill="#ffffff" fill-opacity="0.91"/>
<rect x="667.40" y="869.40" width="1.7" height="1.7" fill="#ffffff" fill-opacity="0.82"/>
<rect x="667.40" y="872.35" width="1.7" height="1.7" fill="#ffffff" fill-opacity="0.73"/>
<rect x="667.40" y="875.30" width="1.7" height="1.7" fill="#ffffff" fill-opacity="0.64"/>
<rect x="670.35" y="863.50" width="1.7" height="1.7" fill="#ffffff" fill-opacity="1.00"/>
<rect x="670.35" y="866.45" width="1.7" height="1.7" fill="#ffffff" fill-opacity="0.91"/>
<rect x="670.35" y="869.40" width="1.7" height="1.7" fill="#ffffff" fill-opacity="0.82"/>
<rect x="670.35" y="872.35" width="1.7" height="1.7" fill="#ffffff" fill-opacity="0.73"/>
<rect x="670.35" y="875.30" width="1.7" height="1.7" fill="#ffffff" fill-opacity="0.64"/>
<rect x="673.30" y="863.50" width="1.7" height="1.7" fill="#ffffff" fill-opacity="1.00"/>
<rect x="673.30" y="866.45" width="1.7" height="1.7" fill="#ffffff" fill-opacity="0.91"/>
<rect x="673.30" y="869.40" width="1.7" height="1.7" fill="#ffffff" fill-opacity="0.82"/>
<rect x="673.30" y="872.35" width="1.7" height="1.7" fill="#ffffff" fill-opacity="0.73"/>
<rect x="673.30" y="875.30" width="1.7" height="1.7" fill="#ffffff" fill-opacity="0.64"/>
<path d="M678.2 868.2h6l-3 3.7z" fill="#2a2a2a"/>
<rect x="691.2" y="863.2" width="6.8" height="5.8" rx="0.8" fill="#a9c5e9" stroke="#1b3870" stroke-width="1.1"/>
<rect x="693.2" y="865.0" width="2.8" height="2.2" fill="none" stroke="#7ea4d6" stroke-width="0.5"/>
<rect x="699.0" y="863.2" width="6.8" height="5.8" rx="0.8" fill="#a9c5e9" stroke="#1b3870" stroke-width="1.1"/>
<rect x="701.0" y="865.0" width="2.8" height="2.2" fill="none" stroke="#7ea4d6" stroke-width="0.5"/>
<rect x="691.2" y="870.0" width="6.8" height="5.8" rx="0.8" fill="#a9c5e9" stroke="#1b3870" stroke-width="1.1"/>
<rect x="693.2" y="871.8" width="2.8" height="2.2" fill="none" stroke="#7ea4d6" stroke-width="0.5"/>
<rect x="699.0" y="870.0" width="6.8" height="5.8" rx="0.8" fill="#a9c5e9" stroke="#1b3870" stroke-width="1.1"/>
<rect x="701.0" y="871.8" width="2.8" height="2.2" fill="none" stroke="#7ea4d6" stroke-width="0.5"/>
<path d="M709.2 868.2h6l-3 3.7z" fill="#2a2a2a"/>
</g>
</svg>
</body></html>
